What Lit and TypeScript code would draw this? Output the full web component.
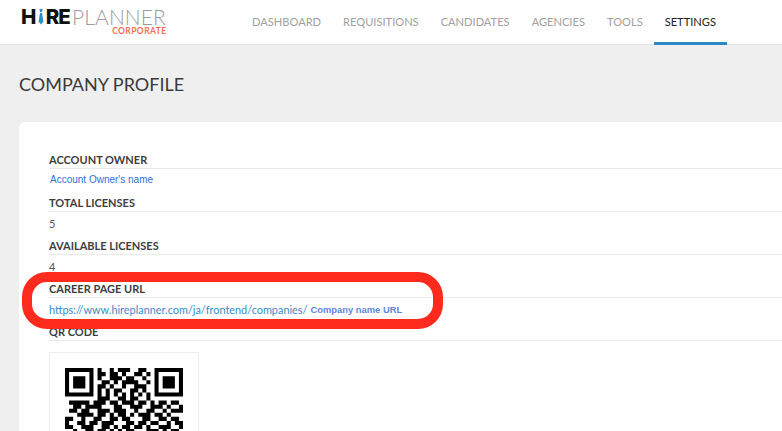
import { LitElement, css, html, svg } from 'lit';
import { customElement } from 'lit/decorators.js';

const navItems = ['DASHBOARD', 'REQUISITIONS', 'CANDIDATES', 'AGENCIES', 'TOOLS', 'SETTINGS'];

// visible rows of the qr code, 29 modules wide
const qrRows = [
  '11111110100101110011001111111',
  '10000010110110100110101000001',
  '10111010100111011001001011101',
  '10111010011010111100101011101',
  '10111010110100100111001011101',
  '10000010101011001101001000001',
  '11111110101010101010101111111',
  '00000000111001101100100000000',
  '01111101110110111011010110110',
  '00110111100011001110011101001',
  '01101100111011100100110010111',
  '00011110110101101011101101000',
  '11001001100110110001100110110',
  '10011011011100011011011001011',
  '11001110011010110110100111001',
  '00100110110101011000111010110',
];

const qrPath = qrRows
  .flatMap((row, y) => [...row].map((c, x) => (c === '1' ? `M${x} ${y}h1v1h-1z` : '')))
  .join('');

@customElement('app-root')
export class AppRoot extends LitElement {
  static styles = css`
    :host {
      display: block;
      position: relative;
      height: 431px;
      overflow: hidden;
      background: #efefef;
      font-family: Lato, sans-serif;
      color: #3d3d3d;
    }
    .header {
      display: flex;
      align-items: stretch;
      height: 44px;
      background: #fff;
      border-bottom: 1px solid #e0e0e0;
    }
    .logo {
      width: 241px;
      padding: 7px 0 0 21px;
      box-sizing: border-box;
    }
    .logo-main {
      display: flex;
      align-items: center;
      height: 20px;
      font-size: 20px;
      line-height: 20px;
    }
    .hire {
      font-family: Inter, sans-serif;
      font-weight: 800;
      font-size: 20.5px;
      color: #111;
    }
    .hire.re {
      letter-spacing: -1.2px;
    }
    .tie {
      margin: 0 1.5px 0 2px;
    }
    .planner {
      margin-left: 2.5px;
      font-family: Lato, sans-serif;
      font-weight: 300;
      font-size: 21px;
      color: #9c9c9c;
      letter-spacing: 0.1px;
    }
    .corporate {
      width: 145.5px;
      text-align: right;
      font-size: 8.5px;
      line-height: 8px;
      font-weight: 700;
      letter-spacing: 0.4px;
      color: #f96d55;
    }
    .nav {
      display: flex;
    }
    .nav a {
      display: flex;
      align-items: center;
      padding: 0 11px;
      font-size: 11.12px;
      color: #a0a0a0;
      margin-bottom: -1px;
      border-bottom: 3px solid transparent;
      box-sizing: border-box;
    }
    .nav a.active {
      color: #222;
      border-bottom-color: #2b8ac6;
    }
    h1 {
      margin: 0;
      padding: 27px 0 0 19px;
      height: 50px;
      font-size: 18px;
      line-height: 24px;
      font-weight: 400;
      color: #3a3a3a;
    }
    .card {
      margin-left: 19px;
      padding: 30px 0 0 30px;
      height: 400px;
      background: #fff;
      border-radius: 6px 0 0 0;
    }
    .field {
      height: 43px;
    }
    .field.qr {
      height: 28px;
    }
    .label {
      height: 16px;
      font-size: 11px;
      line-height: 16px;
      font-weight: 700;
      color: #3d3d3d;
      border-bottom: 1px solid #eaeaea;
    }
    .value {
      font-size: 11px;
      line-height: 24px;
      color: #555;
    }
    .value.owner {
      line-height: 20px;
    }
    .note {
      margin-left: 1px;
      font-family: 'Liberation Sans', sans-serif;
      font-size: 10px;
      color: #2f72d8;
    }
    .url {
      font-size: 10.9px;
      color: #3a8cc8;
    }
    .url-note {
      font-family: 'Liberation Sans', sans-serif;
      font-size: 9.4px;
      font-weight: 700;
      color: #5f84d8;
      margin-left: 3px;
      vertical-align: 1px;
    }
    .qr-box {
      width: 150px;
      height: 120px;
      padding: 15px;
      box-sizing: border-box;
      border: 1px solid #eee;
    }
    .qr-box svg {
      display: block;
      filter: blur(0.3px);
    }
    .ring {
      position: absolute;
      left: 22px;
      top: 272px;
      width: 421px;
      height: 57px;
      box-sizing: border-box;
      border: 10px solid #fe2a1e;
      border-radius: 25px;
    }
  `;

  render() {
    return html`
      <div class="header">
        <div class="logo">
          <div class="logo-main">
            <span class="hire">H</span>
            <svg class="tie" width="6" height="16" viewBox="0 0 6 16">
              <path d="M1.4 0H4.6L4 3H2Z" fill="#2c8fd0"></path>
              <path d="M2 4H4L5.4 12.5L3 15.5L.6 12.5Z" fill="#2c8fd0"></path>
            </svg>
            <span class="hire re">RE</span><span class="planner">PLANNER</span>
          </div>
          <div class="corporate">CORPORATE</div>
        </div>
        <nav class="nav">
          ${navItems.map(
            (item) => html`<a class=${item === 'SETTINGS' ? 'active' : ''}>${item}</a>`
          )}
        </nav>
      </div>
      <h1>COMPANY PROFILE</h1>
      <div class="card">
        <div class="field">
          <div class="label">ACCOUNT OWNER</div>
          <div class="value owner"><span class="note">Account Owner's name</span></div>
        </div>
        <div class="field">
          <div class="label">TOTAL LICENSES</div>
          <div class="value">5</div>
        </div>
        <div class="field">
          <div class="label">AVAILABLE LICENSES</div>
          <div class="value">4</div>
        </div>
        <div class="field">
          <div class="label">CAREER PAGE URL</div>
          <div class="value">
            <span class="url">https://www.hireplanner.com/ja/frontend/companies/</span><span class="url-note">Company name URL</span>
          </div>
        </div>
        <div class="field qr">
          <div class="label">QR CODE</div>
        </div>
        <div class="qr-box">
          <svg width="118" height="66" viewBox="0 0 29 16.2">
            ${svg`<path d=${qrPath} fill="#000"></path>`}
          </svg>
        </div>
      </div>
      <div class="ring"></div>
    `;
  }
}
